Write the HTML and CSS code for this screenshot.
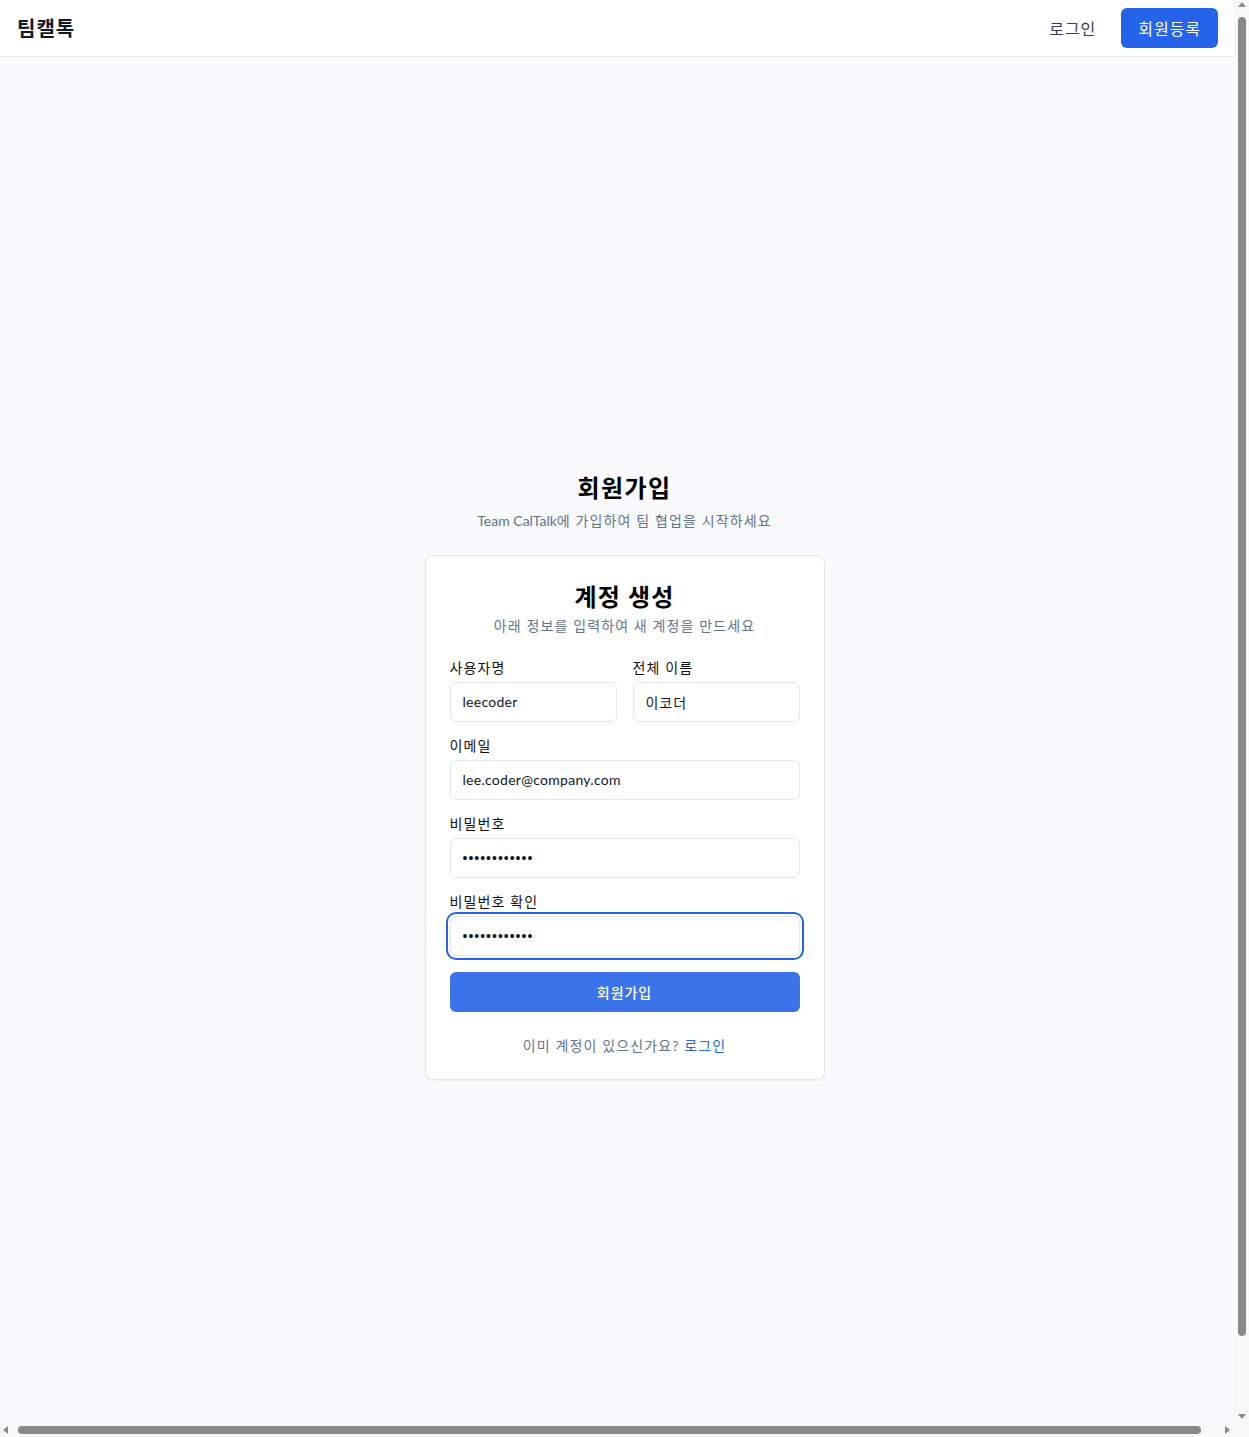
FILE: index.html
```html
<!DOCTYPE html>
<html lang="ko">
<head>
<meta charset="utf-8">
<title>팀캘톡 - 회원가입</title>
<link rel="stylesheet" href="styles.css">
</head>
<body>
<header class="topbar">
  <div class="logo">팀캘톡</div>
  <nav class="nav">
    <a class="nav-ghost" href="#">로그인</a>
    <a class="nav-primary" href="#">회원등록</a>
  </nav>
</header>
<main class="main">
  <div class="wrap">
    <div class="intro">
      <h1 class="intro-title">회원가입</h1>
      <p class="intro-sub"><span class="latin">Team CalTalk</span>에 가입하여 팀 협업을 시작하세요</p>
    </div>
    <section class="card">
      <div class="card-head">
        <h2 class="card-title">계정 생성</h2>
        <p class="card-sub">아래 정보를 입력하여 새 계정을 만드세요</p>
      </div>
      <form class="form">
        <div class="row2">
          <div class="field">
            <label class="label">사용자명</label>
            <input class="input latin" type="text" value="leecoder">
          </div>
          <div class="field">
            <label class="label">전체 이름</label>
            <input class="input" type="text" value="이코더">
          </div>
        </div>
        <div class="field">
          <label class="label">이메일</label>
          <input class="input latin" type="email" value="lee.coder@company.com">
        </div>
        <div class="field">
          <label class="label">비밀번호</label>
          <input class="input pw" type="password" value="password1234">
        </div>
        <div class="field">
          <label class="label">비밀번호 확인</label>
          <input class="input pw input-focus" type="password" value="password1234">
        </div>
        <button class="submit" type="button">회원가입</button>
      </form>
      <p class="foot">이미 계정이 있으신가요? <a class="foot-link" href="#">로그인</a></p>
    </section>
  </div>
</main>
<div class="sb-v" aria-hidden="true">
  <span class="sb-arrow sb-up"></span>
  <span class="sb-thumb-v"></span>
  <span class="sb-arrow sb-down"></span>
</div>
<div class="sb-h" aria-hidden="true">
  <span class="sb-arrow sb-left"></span>
  <span class="sb-thumb-h"></span>
  <span class="sb-arrow sb-right"></span>
</div>
<div class="sb-corner" aria-hidden="true"></div>
</body>
</html>
```
FILE: styles.css
```css
* { box-sizing: border-box; }
html, body { margin: 0; padding: 0; }
body {
  font-family: "Lato", "Noto Sans CJK KR", sans-serif;
  background: #f8fafc;
  color: #0f172a;
  letter-spacing: 0.07em;
}
.latin { letter-spacing: 0; }
.topbar {
  width: calc(100vw - 15px);
  height: 57px;
  background: #ffffff;
  border-bottom: 1px solid #e5e7eb;
  display: flex;
  align-items: center;
  justify-content: space-between;
  padding: 0 16px 1px 17px;
}
.logo {
  font-size: 20px;
  font-weight: 700;
  color: #111827;
  letter-spacing: 0.05em;
}
.nav {
  display: flex;
  align-items: center;
  gap: 8px;
}
.nav-ghost, .nav-primary {
  display: inline-flex;
  align-items: center;
  justify-content: center;
  height: 40px;
  padding: 0 17px;
  border-radius: 6px;
  font-size: 16px;
  letter-spacing: 0.06em;
  text-decoration: none;
}
.nav-ghost { color: #374151; }
.nav-primary { background: #2563eb; color: #ffffff; }
.main {
  width: 100vw;
  min-height: 100vh;
  display: flex;
  align-items: center;
  justify-content: center;
}
.wrap {
  width: 400px;
  display: flex;
  flex-direction: column;
  gap: 24px;
}
.intro { text-align: center; }
.intro-title {
  margin: 0;
  font-size: 24px;
  line-height: 32px;
  font-weight: 700;
  color: #000;
  letter-spacing: 0.06em;
}
.intro-sub {
  margin: 7px 0 0;
  font-size: 14px;
  line-height: 20px;
  color: #64748b;
}
.card {
  background: #ffffff;
  border: 1px solid #e2e8f0;
  border-radius: 8px;
  box-shadow: 0 1px 2px rgba(0,0,0,0.05);
  padding: 0 24px 23px;
}
.card-head {
  padding: 25px 0 24px;
  text-align: center;
  display: flex;
  flex-direction: column;
  gap: 3px;
}
.card-title {
  margin: 0;
  font-size: 24px;
  line-height: 32px;
  font-weight: 700;
  color: #000;
  letter-spacing: 0.05em;
}
.card-sub {
  margin: 0;
  font-size: 14px;
  line-height: 20px;
  color: #64748b;
}
.form {
  display: flex;
  flex-direction: column;
  gap: 16px;
}
.row2 {
  display: grid;
  grid-template-columns: 1fr 1fr;
  gap: 16px;
}
.field {
  display: flex;
  flex-direction: column;
  gap: 8px;
}
.label {
  font-size: 14px;
  line-height: 16px;
  margin-top: 0;
  margin-bottom: -2px;
  font-weight: 400;
  color: #111;
}
.input {
  height: 40px;
  width: 100%;
  border: 1px solid #e2e8f0;
  border-radius: 6px;
  background: #fff;
  padding: 0 12px;
  font-family: inherit;
  font-size: 14px;
  letter-spacing: 0.07em;
  color: #0f172a;
  outline: none;
}
.input.latin { letter-spacing: 0.02em; }
.input.pw {
  font-family: "Liberation Sans", sans-serif;
  font-size: 14px;
  letter-spacing: 1px;
}
.input-focus {
  box-shadow: 0 0 0 2px #ffffff, 0 0 0 4px #2563eb;
}
.submit {
  height: 40px;
  border: 0;
  border-radius: 6px;
  background: #3b73e8;
  color: #ffffff;
  font-family: inherit;
  font-size: 14px;
  font-weight: 500;
  letter-spacing: 0.07em;
}
.foot {
  margin: 24px 0 0;
  text-align: center;
  font-size: 14px;
  line-height: 20px;
  color: #64748b;
}
.foot-link {
  color: #2563eb;
  text-decoration: none;
}

/* simulated browser scrollbars (overlay) */
.sb-v {
  position: fixed;
  top: 0;
  right: 0;
  width: 15px;
  height: calc(100vh - 15px);
  background: #f8f8f8;
}
.sb-h {
  position: fixed;
  left: 0;
  bottom: 0;
  width: calc(100vw - 15px);
  height: 15px;
  background: #f8f8f8;
}
.sb-corner {
  position: fixed;
  right: 0;
  bottom: 0;
  width: 15px;
  height: 15px;
  background: #f8f8f8;
}
.sb-thumb-v {
  position: absolute;
  left: 4px;
  top: 17px;
  width: 8px;
  height: 1319px;
  border-radius: 4px;
  background: #8a8a8a;
}
.sb-thumb-h {
  position: absolute;
  top: 4px;
  left: 18px;
  width: 1183px;
  height: 8px;
  border-radius: 4px;
  background: #8a8a8a;
}
.sb-arrow {
  position: absolute;
  width: 0;
  height: 0;
  border: 4px solid transparent;
}
.sb-up { left: 3.5px; top: 2px; border-bottom: 5px solid #8a8a8a; border-top-width: 0; }
.sb-down { left: 3.5px; bottom: 3px; border-top: 5px solid #8a8a8a; border-bottom-width: 0; }
.sb-left { top: 3.5px; left: 3px; border-right: 5px solid #8a8a8a; border-left-width: 0; }
.sb-right { top: 3.5px; right: 4px; border-left: 5px solid #8a8a8a; border-right-width: 0; }
```
